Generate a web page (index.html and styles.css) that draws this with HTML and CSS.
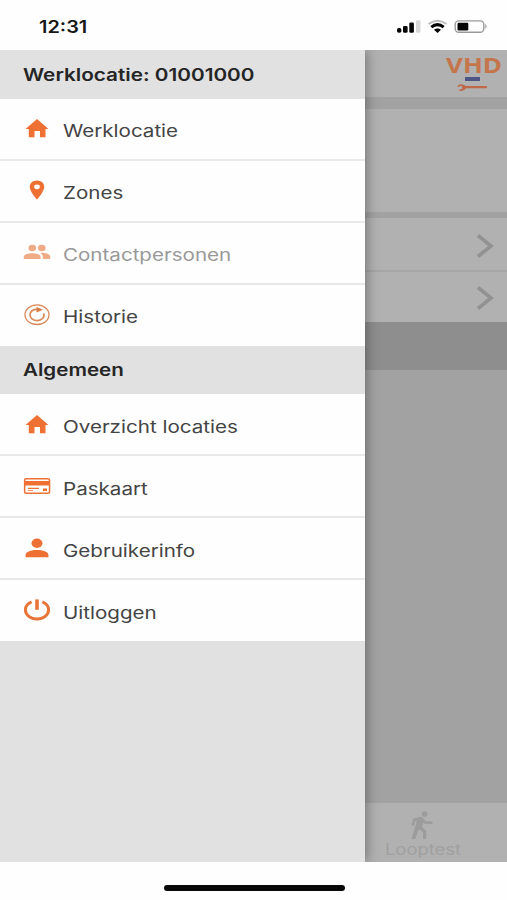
FILE: index.html
```html
<!DOCTYPE html>
<html lang="nl">
<head>
<meta charset="utf-8">
<title>Werklocatie</title>
<link rel="stylesheet" href="styles.css">
</head>
<body>
<header class="status">
  <span class="time">12:31</span>
  <svg class="indicators" width="92" height="16" viewBox="0 0 92 16">
    <g fill="#050505"><rect x="0" y="9" width="4.4" height="4.8" rx="1.8"/><rect x="6" y="7" width="4.6" height="6.8" rx="1.3"/><rect x="12.3" y="3.5" width="4.6" height="10.3" rx="1.3"/></g>
    <rect x="19" y="1.3" width="4.4" height="12.5" rx="1.2" fill="#d6d6d6"/>
    <g fill="none" stroke-width="2"><path d="M31.5 5Q40.5-1.7 49.5 5" stroke="#bdbdbd"/><path d="M34.3 8.2Q40.5 3 46.7 8.2" stroke="#050505" stroke-width="3"/></g>
    <path d="M37 10.8Q40.5 8.3 44 10.8L40.5 14Z" fill="#050505"/>
    <rect x="58.2" y="1.9" width="28.6" height="11.4" rx="3.5" fill="none" stroke="#999" stroke-width="1.4"/>
    <rect x="60.5" y="3.8" width="10.8" height="7.6" rx="1.2" fill="#050505"/>
    <path d="M88.3 5Q91 7.5 88.3 10Z" fill="#999"/>
  </svg>
</header>
<div class="app">
  <nav class="drawer">
    <h2 class="heading first"><span>Werklocatie: 01001000</span></h2>
    <ul class="menu">
      <li class="item"><svg class="icon" viewBox="0 0 28 24"><path d="M14 2L25.5 12H22.5V20.3H17V14H11.5V20.3H5.8V12H2.5Z"/></svg><span>Werklocatie</span></li>
      <li class="item"><svg class="icon" viewBox="0 0 28 24"><path fill-rule="evenodd" d="M14 1.5C9.8 1.5 6.7 4.3 6.7 8C6.7 12.5 14 20.5 14 20.5S21.3 12.5 21.3 8C21.3 4.3 18.2 1.5 14 1.5ZM14 5.4A2.9 2.4 0 1 1 14 10.2A2.9 2.4 0 1 1 14 5.4Z"/></svg><span>Zones</span></li>
      <li class="item disabled"><svg class="icon" viewBox="0 0 28 24"><ellipse cx="9.3" cy="7" rx="3.8" ry="3.2"/><ellipse cx="18.8" cy="7" rx="3.8" ry="3.2"/><path d="M.8 18V15.8C.8 10.9 17.6 10.9 17.6 15.8V18ZM18 11.8C22.7 11.8 27.3 13.2 27.3 15.8V18H19.8V15.8Q19.8 13.5 17.3 12Z"/></svg><span>Contactpersonen</span></li>
      <li class="item"><svg class="icon" viewBox="0 0 28 24"><g fill="none" stroke="#d98a58"><ellipse cx="14" cy="11.7" rx="12" ry="9.8" stroke-width="1.3"/><path d="M20.7 10.5C22 14.4 18.5 17.6 14.3 17.6C10 17.6 7 15 7 11.7C7 8.3 10 6.2 14.5 6.4" stroke-width="1.7"/></g><path fill="#d77c42" d="M13.5 4L20 6.8L13.5 9.4Z"/></svg><span>Historie</span></li>
    </ul>
    <h2 class="heading"><span>Algemeen</span></h2>
    <ul class="menu lower">
      <li class="item"><svg class="icon" viewBox="0 0 28 24"><path d="M14 2L25.5 12H22.5V20.3H17V14H11.5V20.3H5.8V12H2.5Z"/></svg><span>Overzicht locaties</span></li>
      <li class="item"><svg class="icon" viewBox="0 0 28 24"><path fill-rule="evenodd" d="M3.2 3H24.8Q27.3 3 27.3 5V17Q27.3 19 24.8 19H3.2Q.9 19 .9 17V5Q.9 3 3.2 3ZM3.2 4.4Q2.4 4.4 2.4 5.2V6H25.8V5.2Q25.8 4.4 25 4.4ZM2.4 10.5V16.8Q2.4 17.6 3.2 17.6H25Q25.8 17.6 25.8 16.8V10.5Z"/><path d="M5 12.8H16V14H5ZM5 15H10V15.8H5ZM20 13.5H24V16H20Z"/></svg><span>Paskaart</span></li>
      <li class="item"><svg class="icon" viewBox="0 0 28 24"><ellipse cx="14" cy="6.3" rx="5.5" ry="4.7"/><path d="M2.6 20.3V18C2.6 11.3 25.4 11.3 25.4 18V20.3Z"/></svg><span>Gebruikerinfo</span></li>
      <li class="item"><svg class="icon" viewBox="0 0 28 24"><g fill="none" stroke="#e8743a" stroke-width="3"><path d="M8.6 2.8C4.8 4.4 2.4 7.4 2.4 10.8C2.4 16 7.6 20 14 20S25.6 16 25.6 10.8C25.6 7.4 23.2 4.4 19.4 2.8"/><path d="M14 .4V10.8" stroke-width="3.6"/></g></svg><span>Uitloggen</span></li>
    </ul>
  </nav>
  <main class="page">
    <div class="topbar">
      <svg class="logo" width="60" height="38" viewBox="0 0 60 38">
        <text x="1" y="18" textLength="56" lengthAdjust="spacingAndGlyphs">VHD</text>
        <rect x="20" y="22" width="15" height="4" fill="#4f5585"/>
        <path d="M21 31H41.5Q43 32.2 41.5 33.3H21Q18.5 37.3 13.2 35.3L17.4 33.4L16.6 30.8L12.2 32.3Q14 26.7 21 31Z" fill="#bf6749"/>
      </svg>
    </div>
    <div class="panel"></div>
    <div class="rows">
      <div class="row"><svg width="18" height="26" viewBox="0 0 18 26"><path d="M2 2.5L15 13L2 23.5"/></svg></div>
      <div class="row"><svg width="18" height="26" viewBox="0 0 18 26"><path d="M2 2.5L15 13L2 23.5"/></svg></div>
    </div>
    <div class="band"></div>
    <div class="tabbar">
      <div class="tab">
        <svg width="24" height="29" viewBox="0 0 24 29"><ellipse cx="14.7" cy="3" rx="3" ry="2.7"/><path d="M3 7.8L10 5.7Q13 5.6 14 8L15.5 10.2L22.5 10.6V13L14.5 12.8L13 11.5L12 16L16.2 20V28H13V21.5L9 18L5.2 28H1.5L7 9.8L4.8 10.7L4.3 14.5H1.3Z"/></svg>
        <span>Looptest</span>
      </div>
    </div>
  </main>
</div>
<footer class="home"><div class="home-bar"></div></footer>
</body>
</html>
```

FILE: styles.css
```css
* { box-sizing: border-box; }
body {
  margin: 0;
  width: 507px;
  height: 900px;
  overflow: hidden;
  display: flex;
  flex-direction: column;
  background: #fefefe;
  font-family: Inter, "Liberation Sans", sans-serif;
  color: #444;
}
.status {
  height: 50px;
  display: flex;
  justify-content: space-between;
  align-items: center;
  padding: 3px 18px 0 39px;
}
.time {
  font-size: 17px;
  font-weight: 600;
  color: #171717;
  transform: scaleX(1.17);
  transform-origin: left;
}
.app { height: 812px; display: flex; overflow: hidden; }
.drawer {
  width: 365px;
  background: #e1e1e1;
  position: relative;
  z-index: 1;
  box-shadow: 1px 0 12px rgba(0, 0, 0, .38);
}
.heading {
  margin: 0;
  height: 48px;
  padding: 0 23px;
  display: flex;
  align-items: center;
  background: #e1e1e1;
  font-size: 17px;
  font-weight: 600;
  color: #252525;
}
.heading.first { height: 49px; }
.heading span, .item span {
  white-space: nowrap;
  transform: scaleX(1.21);
  transform-origin: left;
}
.heading.first span { transform: scaleX(1.22); }
.menu { list-style: none; margin: 0; padding: 0; }
.item {
  height: 62px;
  padding: 3px 0 0 23px;
  display: flex;
  align-items: center;
  gap: 12px;
  background: #fefefe;
  border-bottom: 2px solid #e9e9e9;
  font-size: 17px;
}
.lower .item { padding-top: 5px; }
.item:last-child { height: 61px; border-bottom: 0; }
.icon {
  width: 28px;
  height: 24px;
  margin-bottom: 4px;
  fill: #ef7033;
}
.disabled { color: #999; }
.disabled .icon { fill: #efaa86; }
.page {
  width: 142px;
  display: flex;
  flex-direction: column;
  background: #a2a2a2;
}
.topbar {
  height: 47px;
  padding: 5px 2px 0 0;
  display: flex;
  justify-content: flex-end;
  background: #b1b1b1;
}
.logo text {
  font-family: "Open Sans", sans-serif;
  font-size: 22px;
  font-weight: 700;
  fill: #c5754c;
}
.logo { overflow: visible; }
.panel { height: 103px; margin: 12px 0 6px; background: #b1b1b1; }
.row {
  height: 52px;
  padding: 4px 13px 0 0;
  display: flex;
  justify-content: flex-end;
  align-items: center;
  background: #b1b1b1;
}
.row + .row { padding-top: 2px; border-top: 2px solid #a6a6a6; }
.row path { fill: none; stroke: #929292; stroke-width: 3.6; }
.band { height: 48px; background: #8e8e8e; }
.tabbar {
  height: 59px;
  margin-top: auto;
  padding: 8px 0 0 20px;
  background: #b1b1b1;
}
.tab {
  width: 76px;
  display: flex;
  flex-direction: column;
  align-items: center;
  font-size: 15.5px;
  line-height: 20px;
  color: #a0a0a0;
}
.tab svg { fill: #9c9c9c; margin-right: 3px; }
.tab span { transform: scaleX(1.19); }
.home { height: 38px; display: flex; justify-content: center; padding: 23px 0 0 2px; }
.home-bar { width: 181px; height: 6px; border-radius: 3px; background: #080808; }
```
